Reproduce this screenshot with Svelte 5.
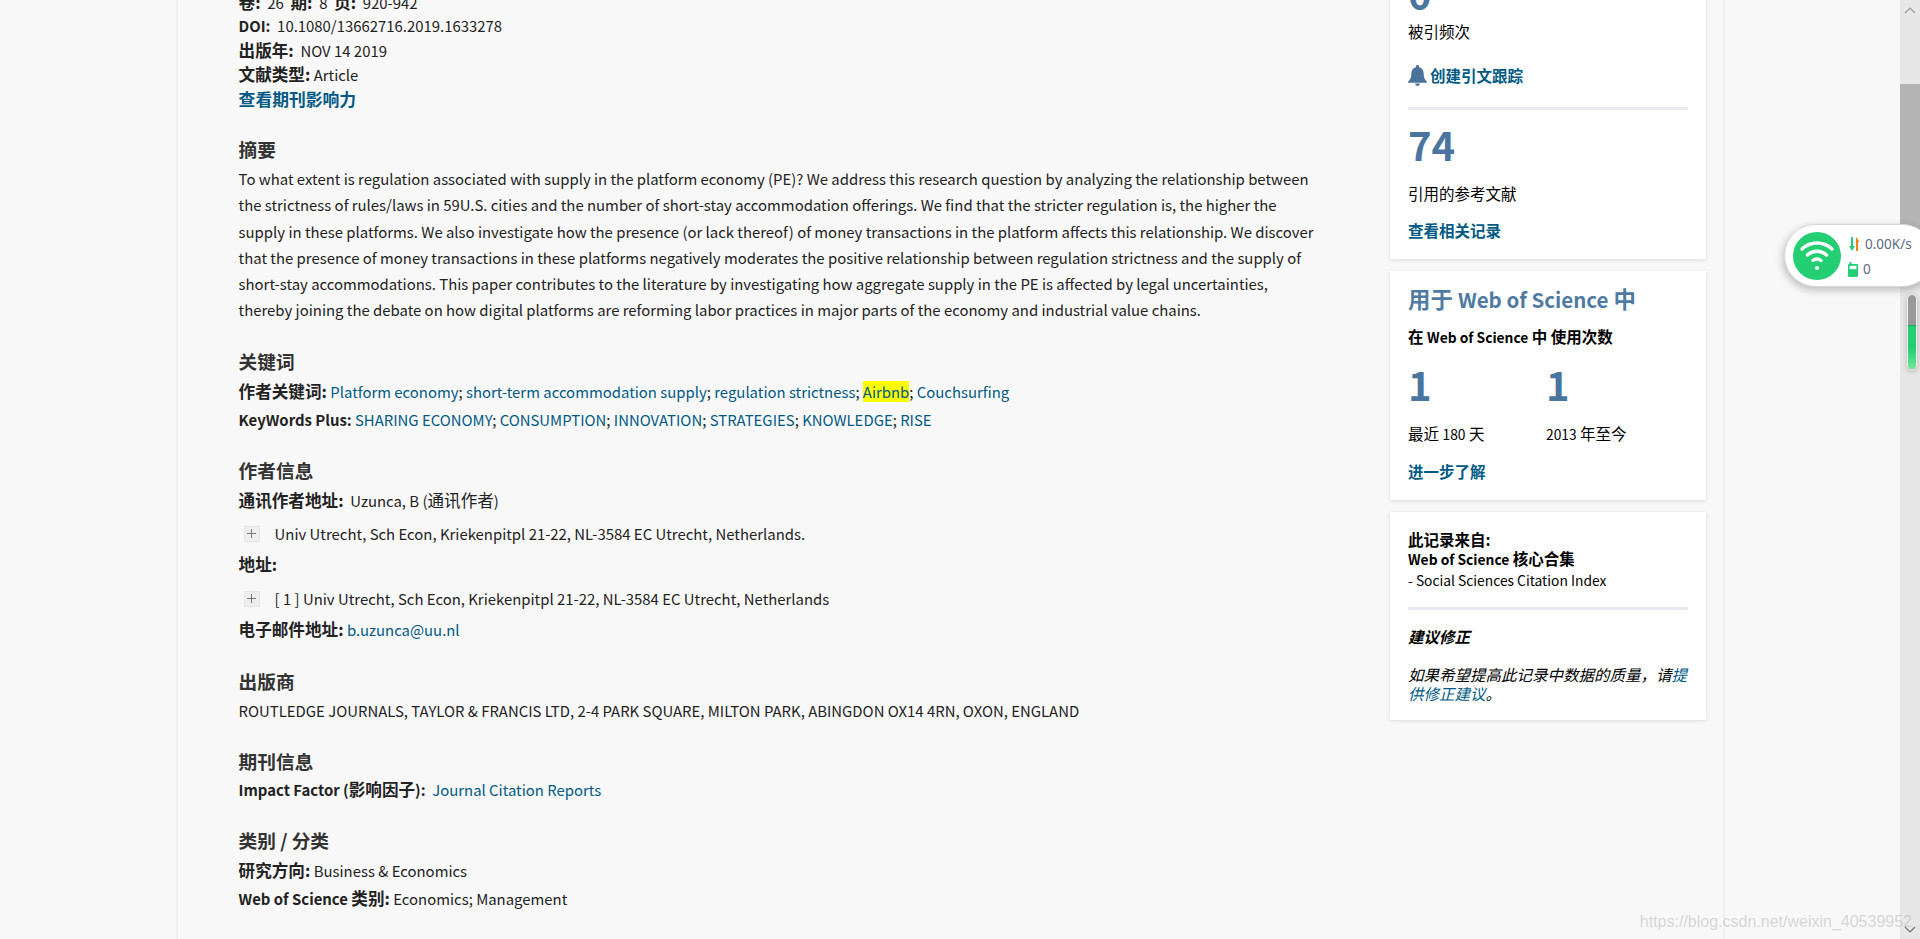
<script>
  const abstract = "To what extent is regulation associated with supply in the platform economy (PE)? We address this research question by analyzing the relationship between the strictness of rules/laws in 59U.S. cities and the number of short-stay accommodation offerings. We find that the stricter regulation is, the higher the supply in these platforms. We also investigate how the presence (or lack thereof) of money transactions in the platform affects this relationship. We discover that the presence of money transactions in these platforms negatively moderates the positive relationship between regulation strictness and the supply of short-stay accommodations. This paper contributes to the literature by investigating how aggregate supply in the PE is affected by legal uncertainties, thereby joining the debate on how digital platforms are reforming labor practices in major parts of the economy and industrial value chains.";
  const plus = ["SHARING ECONOMY", "CONSUMPTION", "INNOVATION", "STRATEGIES", "KNOWLEDGE", "RISE"];
</script>

<div class="viewport">
  <div class="page">
    <div class="sheet">
      <main class="main">
        <div class="meta">
          <p><b>卷:</b>&nbsp; 26 &nbsp;<b>期:</b>&nbsp; 8 &nbsp;<b>页:</b>&nbsp; 920-942</p>
          <p><b class="lat">DOI:</b>&nbsp; 10.1080/13662716.2019.1633278</p>
          <p><b>出版年:</b>&nbsp; NOV 14 2019</p>
          <p><b>文献类型:</b> Article</p>
          <p class="impact-link"><a class="strong" href="#top">查看期刊影响力</a></p>
        </div>

        <h3 class="h-abs">摘要</h3>
        <p class="abstract">{abstract}</p>

        <h3 class="h-kw">关键词</h3>
        <p class="kw1"><b>作者关键词:</b> <a href="#top">Platform economy</a>; <a href="#top">short-term accommodation supply</a>; <a href="#top">regulation strictness</a>; <a href="#top"><mark>Airbnb</mark></a>; <a href="#top">Couchsurfing</a></p>
        <p class="kw2"><b class="lat">KeyWords Plus:</b>&nbsp;{#each plus as k, i}<a href="#top">{k}</a>{i < plus.length - 1 ? "; " : ""}{/each}</p>

        <h3 class="h-auth">作者信息</h3>
        <p class="corr"><b>通讯作者地址:</b>&nbsp; Uzunca, B (<span class="zh">通讯作者</span>)</p>
        <p class="addr"><span class="expand"><svg viewBox="0 0 9 9" width="9" height="9"><path d="M4.500 0v9M0 4.500h9" stroke="#777" stroke-width="1" fill="none"/></svg></span>Univ Utrecht, Sch Econ, Kriekenpitpl 21-22, NL-3584 EC Utrecht, Netherlands.</p>
        <p class="lbl"><b>地址:</b></p>
        <p class="addr a2"><span class="expand"><svg viewBox="0 0 9 9" width="9" height="9"><path d="M4.500 0v9M0 4.500h9" stroke="#777" stroke-width="1" fill="none"/></svg></span>[ 1 ] Univ Utrecht, Sch Econ, Kriekenpitpl 21-22, NL-3584 EC Utrecht, Netherlands</p>
        <p class="mail"><b>电子邮件地址:</b> <a href="#top">b.uzunca@uu.nl</a></p>

        <h3 class="h-pub">出版商</h3>
        <p class="pub">ROUTLEDGE JOURNALS, TAYLOR &amp; FRANCIS LTD, 2-4 PARK SQUARE, MILTON PARK, ABINGDON OX14 4RN, OXON, ENGLAND</p>

        <h3 class="h-jour">期刊信息</h3>
        <p class="jour"><b class="lat">Impact Factor (</b><b>影响因子</b><b class="lat">):</b>&nbsp; <a href="#top">Journal Citation Reports</a></p>

        <h3 class="h-cat">类别 / 分类</h3>
        <p class="cat1"><b>研究方向:</b> Business &amp; Economics</p>
        <p class="cat2"><b class="lat">Web of Science&nbsp;</b><b>类别:</b> Economics; Management</p>
      </main>

      <aside class="side">
        <section class="card c1">
          <div class="big top-num">0</div>
          <div class="c1-label">被引频次</div>
          <a class="alert strong" href="#top">
            <svg viewBox="0 0 20 22" width="19" height="21"><path fill="#4a739c" d="M10 0c1 0 1.700.7 1.700 1.700v.6c3 .8 4.800 3.400 4.800 6.700 0 4 .9 6 2.600 7.500.5.5.9.9.9 1.400v.6H0v-.6c0-.5.4-.9.9-1.400C2.600 15 3.500 13 3.500 9c0-3.300 1.800-5.900 4.800-6.700v-.6C8.300.7 9 0 10 0zM7.600 19.300h4.800c0 1.500-1 2.700-2.400 2.700s-2.400-1.200-2.400-2.700z"/></svg>
            创建引文跟踪
          </a>
          <hr class="rule r1" />
          <div class="big n74">74</div>
          <div class="c1-refs">引用的参考文献</div>
          <a class="strong c1-link" href="#top">查看相关记录</a>
        </section>

        <section class="card c2">
          <h2>用于 <span class="h-lat">Web of Science</span> 中</h2>
          <div class="usage">在 <span class="lat">Web of Science</span> 中 使用次数</div>
          <div class="cols">
            <div><div class="big">1</div><div class="cap">最近 <span class="lat">180</span> 天</div></div>
            <div><div class="big">1</div><div class="cap"><span class="lat">2013</span> 年至今</div></div>
          </div>
          <a class="strong c2-link" href="#top">进一步了解</a>
        </section>

        <section class="card c3">
          <div class="src"><b>此记录来自:</b><br /><b><span class="lat">Web of Science</span> 核心合集</b><br /><span class="lat">- Social Sciences Citation Index</span></div>
          <hr class="rule r3" />
          <div class="fix-h">建议修正</div>
          <div class="fix">如果希望提高此记录中数据的质量，请<a href="#top">提供修正建议</a>。</div>
        </section>
      </aside>
    </div>
  </div>

  <div class="scrollbar">
    <svg class="arrow up" viewBox="0 0 12 7" width="12" height="7"><path d="M1 6l5-5 5 5" fill="none" stroke="#9a9a9a" stroke-width="1.200"/></svg>
    <div class="thumb"></div>
    <svg class="arrow down" viewBox="0 0 12 7" width="12" height="7"><path d="M1 1l5 5 5-5" fill="none" stroke="#6e6e6e" stroke-width="1.200"/></svg>
  </div>

  <div class="widget">
    <div class="disc">
      <svg viewBox="0 0 48 48" width="48" height="48" fill="none" stroke="#fff" stroke-width="3.400" stroke-linecap="round">
        <path d="M9 17c8.500-8 21.500-8 30 0"/>
        <path d="M14.500 23c5.500-5 13.500-5 19 0"/>
        <path d="M20 28.500c2.500-2 5.500-2 8 0"/>
        <circle cx="24" cy="36" r="2" fill="#fff" stroke="none"/>
      </svg>
    </div>
    <div class="stats">
      <div class="stat">
        <svg viewBox="0 0 12 14" width="12" height="14"><path d="M3 0h2v9h2l-3 5-3-5h2z" fill="#24cf73"/><path d="M8 14V0l3.500 5H10v9z" fill="#f57c20"/></svg>
        <span>0.00K/s</span>
      </div>
      <div class="stat">
        <svg viewBox="0 0 10 15" width="10" height="15"><path d="M1.500 0h2v2H9a1 1 0 0 1 1 1v11a1 1 0 0 1-1 1H1a1 1 0 0 1-1-1V3a1 1 0 0 1 1-1h.5z" fill="#24cf73"/><rect x="1.600" y="3.800" width="6.800" height="3.400" fill="#fff"/></svg>
        <span>0</span>
      </div>
    </div>
  </div>

  <div class="meter"><div class="level"></div></div>

  <div class="watermark">https://blog.csdn.net/weixin_40539952</div>
</div>

<style>
  :global(body) { margin: 0; background: #f8f8f8; }
  .viewport {
    position: relative;
    display: flex;
    height: 939px;
    overflow: hidden;
    font-family: "Noto Sans CJK SC", "Noto Sans", sans-serif;
    font-size: 14.9px;
    color: #222;
    background: #f8f8f8;
  }
  .page { flex: 1; min-width: 0; overflow: hidden; }
  .sheet {
    box-sizing: border-box;
    display: flex;
    width: 1549px;
    height: 1000px;
    margin: -10px 0 0 176px;
    border-left: 2px solid #f0f0f0;
    border-right: 2px solid #f0f0f0;
  }
  p, h2, h3 { margin: 0; }
  b { font-weight: 700; font-size: 16.6px; color: #222; }
  b.lat { font-size: 14.9px; }
  .zh { font-size: 16.6px; }
  a { color: #005a85; text-decoration: none; }
  a.strong { font-weight: 700; font-size: 16.8px; }
  mark { background: #ffff00; color: inherit; }
  .main { box-sizing: border-box; width: 1210px; padding-left: 60.6px; line-height: 24px; }
  .meta p { height: 24px; }
  .meta .impact-link { margin-top: 1px; }
  h3 { font-size: 18.7px; font-weight: 700; line-height: 26px; color: #333; }
  .h-abs { margin-top: 25px; }
  .abstract { width: 1085px; line-height: 26.3px; margin-top: 4px; }
  .h-kw { margin-top: 24px; }
  .kw1 { margin-top: 5px; }
  .kw2 { margin-top: 4px; }
  .h-auth { margin-top: 25px; }
  .corr { margin-top: 5px; }
  .addr { display: flex; align-items: center; margin-top: 9px; padding-left: 5px; }
  .a2 { margin-top: 10px; }
  .lbl { margin-top: 6px; }
  .mail { margin-top: 6px; }
  .expand {
    display: inline-flex;
    align-items: center;
    justify-content: center;
    box-sizing: border-box;
    width: 16px;
    height: 16px;
    margin-right: 15px;
    background: #eee;
    border: 1px solid #e4e4e4;
  }
  .h-pub { margin-top: 26px; }
  .pub { margin-top: 5px; }
  .h-jour { margin-top: 25px; }
  .jour { margin-top: 3px; }
  .h-cat { margin-top: 25px; }
  .cat1 { margin-top: 5px; }
  .cat2 { margin-top: 3px; }

  .side { width: 316px; padding-left: 1px; margin-left: 1px; font-size: 15.500px; }
  .side b { font-size: 15.500px; color: #000; }
  .side a.strong { font-size: 15.500px; }
  .lat { font-size: 13.800px; }
  .card {
    box-sizing: border-box;
    width: 316px;
    padding: 0 18px;
    background: #fff;
    box-shadow: 0 1px 4px rgba(0, 0, 0, 0.12);
    color: #000;
  }
  .big { font-size: 40px; font-weight: 700; line-height: 44px; color: #4a759f; }
  .c1 { height: 269px; margin-top: 0; }
  .top-num { height: 0; transform: translateY(-20px); }
  .c1-label { padding-top: 29px; line-height: 24px; }
  .alert { display: flex; align-items: center; gap: 3px; margin-top: 20px; line-height: 24px; height: 24px; }
  .rule { height: 3px; margin: 0; border: 0; background: #e9e9f1; }
  .r1 { margin-top: 20px; }
  .n74 { margin-top: 12px; }
  .c1-refs { margin-top: 15px; line-height: 24px; }
  .c1-link { display: block; margin-top: 13px; line-height: 24px; }
  .c2 { height: 229px; margin-top: 12px; padding-top: 14px; }
  h2 { font-size: 22.4px; font-weight: 700; line-height: 26px; color: #4f7aa3; }
  .h-lat { font-size: 20.5px; }
  .usage { margin-top: 12px; font-weight: 700; line-height: 24px; }
  .cols { display: grid; grid-template-columns: 138px 1fr; margin-top: 13px; }
  .cap { margin-top: 15px; line-height: 24px; }
  .c2-link { display: block; margin-top: 13px; line-height: 24px; }
  .c3 { height: 208px; margin-top: 12px; padding-top: 18px; }
  .src { line-height: 19.4px; }
  .r3 { margin-top: 17px; }
  .fix-h { margin-top: 14px; font-style: italic; font-weight: 700; line-height: 24px; }
  .fix { margin-top: 16.5px; font-style: italic; line-height: 19px; }

  .scrollbar { position: relative; flex: 0 0 20px; background: #e7e7e7; }
  .thumb { position: absolute; top: 84px; left: 0; right: 0; height: 160px; background: #b4b4b4; }
  .arrow { position: absolute; left: 4px; }
  .up { top: 7px; }
  .down { bottom: 6px; }

  .widget {
    position: absolute;
    top: 224px;
    left: 1784px;
    width: 150px;
    height: 63px;
    box-sizing: border-box;
    display: flex;
    align-items: center;
    gap: 7px;
    padding-left: 8px;
    background: #fff;
    border: 1px solid #d8d8d8;
    border-radius: 32px;
    box-shadow: -1px 3px 8px rgba(0, 0, 0, 0.25);
  }
  .disc {
    display: flex;
    align-items: center;
    justify-content: center;
    width: 48px;
    height: 48px;
    background: #24cf73;
    border-radius: 50%;
  }
  .stats { display: flex; flex-direction: column; gap: 7px; padding-top: 2px; }
  .stat { display: flex; align-items: center; gap: 5px; height: 18px; font-family: "Noto Sans", sans-serif; font-size: 13.500px; color: #5a6a80; }
  .stat svg { flex: none; }
  .meter {
    position: absolute;
    top: 294px;
    left: 1907px;
    width: 10px;
    height: 76px;
    box-sizing: border-box;
    border: 1px solid #eee;
    border-radius: 5px;
    overflow: hidden;
    background: #9a9a9a;
    box-shadow: 0 2px 6px rgba(0, 0, 0, 0.2);
  }
  .level { margin-top: 30px; height: 46px; background: linear-gradient(#24cf73 50%, #7fe99b); border-top: 1px solid #1ca85e; }
  .watermark {
    position: absolute;
    right: 8px;
    bottom: 8px;
    font-family: "Liberation Sans", sans-serif;
    font-size: 16px;
    color: rgba(170, 170, 170, 0.45);
    white-space: nowrap;
  }
</style>
